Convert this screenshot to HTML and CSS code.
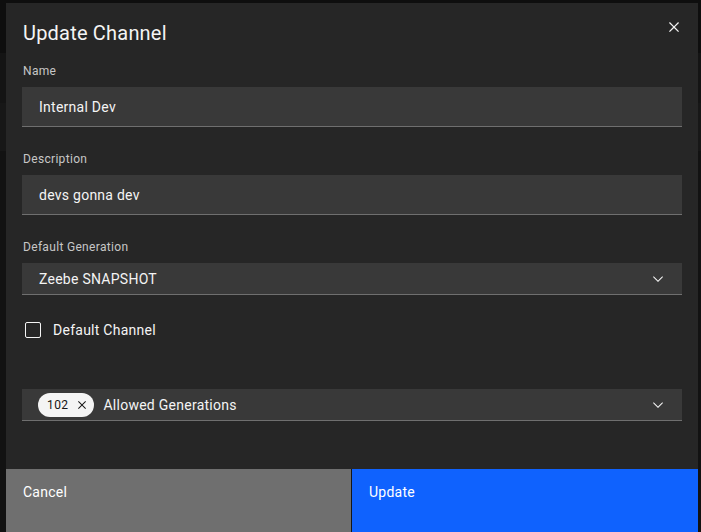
FILE: index.html
```html
<!DOCTYPE html>
<html lang="en">
<head>
<meta charset="utf-8">
<title>Update Channel</title>
<link rel="stylesheet" href="styles.css">
</head>
<body>
<div class="backdrop">
  <div class="modal" role="dialog" aria-label="Update Channel">
    <div class="modal-header">
      <h2 class="modal-title">Update Channel</h2>
      <button class="modal-close" aria-label="Close">
        <svg width="20" height="20" viewBox="0 0 32 32" fill="currentColor"><path d="M24 9.4L22.6 8 16 14.6 9.4 8 8 9.4 14.6 16 8 22.6 9.4 24 16 17.4 22.6 24 24 22.6 17.4 16 24 9.4z"/></svg>
      </button>
    </div>
    <div class="modal-content">
      <div class="form-item">
        <label class="field-label">Name</label>
        <div class="text-input">Internal Dev</div>
      </div>
      <div class="form-item">
        <label class="field-label">Description</label>
        <div class="text-input">devs gonna dev</div>
      </div>
      <div class="form-item">
        <label class="field-label">Default Generation</label>
        <div class="dropdown">
          <span class="dropdown-text">Zeebe SNAPSHOT</span>
          <svg class="chevron" width="16" height="16" viewBox="0 0 16 16" fill="currentColor"><path d="M8 11L3 6 3.7 5.3 8 9.6 12.3 5.3 13 6z"/></svg>
        </div>
      </div>
      <div class="checkbox-row">
        <span class="checkbox-box"></span>
        <span class="checkbox-label">Default Channel</span>
      </div>
      <div class="multiselect">
        <span class="tag">
          <span class="tag-text">102</span>
          <span class="tag-close">
            <svg width="16" height="16" viewBox="0 0 32 32" fill="currentColor"><path d="M24 9.4L22.6 8 16 14.6 9.4 8 8 9.4 14.6 16 8 22.6 9.4 24 16 17.4 22.6 24 24 22.6 17.4 16 24 9.4z"/></svg>
          </span>
        </span>
        <span class="dropdown-text">Allowed Generations</span>
        <svg class="chevron" width="16" height="16" viewBox="0 0 16 16" fill="currentColor"><path d="M8 11L3 6 3.7 5.3 8 9.6 12.3 5.3 13 6z"/></svg>
      </div>
    </div>
    <div class="modal-footer">
      <button class="btn btn-secondary">Cancel</button>
      <button class="btn btn-primary">Update</button>
    </div>
  </div>
</div>
</body>
</html>
```
FILE: styles.css
```css
html, body {
  margin: 0;
  padding: 0;
  height: 100%;
  overflow: hidden;
}
body {
  background: linear-gradient(to bottom,
    #0e0e0e 0, #0e0e0e 53px,
    #141414 53px, #141414 103px,
    #171717 103px, #171717 151px,
    #121212 151px);
  font-family: Roboto, "Noto Sans", sans-serif;
  color: #f4f4f4;
}
.backdrop {
  display: flex;
  padding: 3px 3px 0 6px;
}
.modal {
  width: 692px;
  background: #262626;
  display: flex;
  flex-direction: column;
}
.modal-header {
  position: relative;
  padding: 16px 16px 0 16px;
}
.modal-title {
  margin: 0;
  font-size: 20px;
  line-height: 28px;
  font-weight: 400;
  letter-spacing: 0.2px;
  color: #f4f4f4;
  padding-left: 1px;
}
.modal-close {
  position: absolute;
  top: 0;
  right: 0;
  width: 48px;
  height: 48px;
  border: 0;
  background: transparent;
  color: #f4f4f4;
  display: flex;
  align-items: center;
  justify-content: center;
  padding: 0;
}
.modal-content {
  padding: 16px 16px 48px 16px;
  display: flex;
  flex-direction: column;
}
.form-item {
  display: flex;
  flex-direction: column;
  margin-bottom: 24px;
}
.form-item:nth-child(3) {
  margin-bottom: 0;
}
.field-label {
  font-size: 12px;
  line-height: 16px;
  letter-spacing: 0.32px;
  color: #c6c6c6;
  margin-bottom: 8px;
  padding-left: 1px;
}
.text-input {
  height: 39px;
  background: #393939;
  border-bottom: 1px solid #6f6f6f;
  display: flex;
  align-items: center;
  padding: 0 16px 0 17px;
  font-size: 14px;
  letter-spacing: 0.26px;
  color: #f4f4f4;
}
.dropdown, .multiselect {
  height: 31px;
  background: #393939;
  border-bottom: 1px solid #6f6f6f;
  display: flex;
  align-items: center;
  padding: 0 16px 0 17px;
  font-size: 14px;
  letter-spacing: 0.26px;
  color: #f4f4f4;
}
.multiselect {
  padding-left: 16px;
}
.dropdown-text {
  flex: 1;
}
.chevron {
  color: #f4f4f4;
  flex: none;
}
.checkbox-row {
  margin-top: 27px;
  display: flex;
  align-items: center;
  padding-left: 3px;
  height: 16px;
}
.checkbox-box {
  width: 14px;
  height: 14px;
  border: 1px solid #f4f4f4;
  border-radius: 2px;
  margin-right: 12px;
}
.checkbox-label {
  font-size: 14px;
  letter-spacing: 0.26px;
  color: #f4f4f4;
}
.multiselect {
  margin-top: 51px;
}
.tag {
  display: flex;
  align-items: center;
  height: 24px;
  border-radius: 12px;
  background: #f4f4f4;
  color: #161616;
  padding: 0 4px 0 9px;
  margin-right: 9px;
  font-size: 12px;
  letter-spacing: 0.4px;
}
.tag-close {
  display: flex;
  align-items: center;
  justify-content: center;
  width: 16px;
  height: 16px;
  margin-left: 6px;
  color: #161616;
}
.modal-footer {
  display: grid;
  grid-template-columns: 345px 346px;
  column-gap: 1px;
  background: #161616;
  height: 64px;
}
.btn {
  border: 0;
  margin: 0;
  font-family: inherit;
  font-size: 14px;
  line-height: 18px;
  letter-spacing: 0.26px;
  text-align: left;
  padding: 14px 16px 14px 17px;
  display: flex;
  align-items: flex-start;
  color: #ffffff;
}
.btn-secondary {
  background: #6f6f6f;
}
.btn-primary {
  background: #0f62fe;
}
```
